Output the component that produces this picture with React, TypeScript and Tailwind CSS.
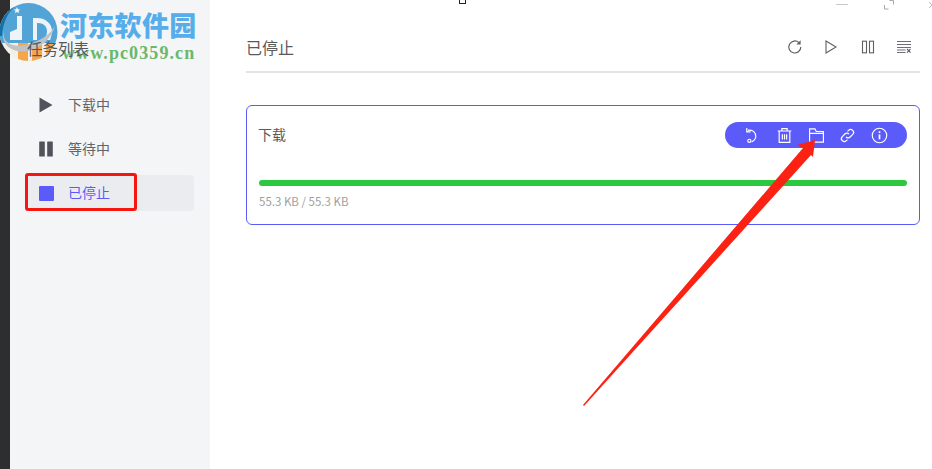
import React from "react";

const cjk = { fontFamily: '"Noto Sans CJK SC", "Noto Sans", sans-serif' };

function NavItem({ icon, label, active }: { icon: React.ReactNode; label: string; active?: boolean }) {
  return (
    <div className={`flex h-9 w-[168px] items-center rounded-[4px] pl-[12px] ${active ? "bg-[#ebecf0] text-[#5b5bfa]" : "text-[#62656b]"}`}>
      <span className="flex w-[16px] justify-center">{icon}</span>
      <span className="ml-[14px] pb-[2px] text-[14px] leading-none">{label}</span>
    </div>
  );
}

function ToolIcon({ children, size = 16 }: { children: React.ReactNode; size?: number }) {
  return (
    <svg width={size} height={size} viewBox="0 0 16 16" fill="none" stroke="currentColor" strokeWidth="1.1">
      {children}
    </svg>
  );
}

export default function App() {
  return (
    <div className="relative flex h-[469px] w-[932px] overflow-hidden bg-white" style={cjk}>
      <div className="w-[10px] shrink-0 bg-[#2e2e2e]" />
      <aside className="flex w-[200px] shrink-0 flex-col bg-[#f4f5f7] pl-[16px]">
        <div className="relative z-10 mt-[37px] h-[22px] pl-[1px] text-[15.5px] leading-[22px] text-[#55585c]">任务列表</div>
        <nav className="mt-[28px] flex flex-col gap-[8px]">
          <NavItem label="下载中" icon={<svg width="14" height="16" viewBox="0 0 14 16"><path d="M0.5 0.5 13.5 8 0.5 15.5Z" fill="#50535c" /></svg>} />
          <NavItem label="等待中" icon={<svg width="14" height="16" viewBox="0 0 14 16"><rect x="0.2" y="0.5" width="5.6" height="15" rx="0.5" fill="#50535c" /><rect x="8.2" y="0.5" width="5.6" height="15" rx="0.5" fill="#50535c" /></svg>} />
          <NavItem active label="已停止" icon={<span className="block h-[15px] w-[15px] rounded-[1px] bg-[#5b5bfa]" />} />
        </nav>
      </aside>

      <main className="min-w-0 flex-1 pl-[36px] pr-[12px]">
        <header className="mt-[28px] flex h-[45px] items-start justify-between border-b-2 border-[#e4e4e4]">
          <h1 className="mt-[8px] text-[16px] font-normal leading-[22px] text-[#5a5a5a]">已停止</h1>
          <div className="mt-[11px] flex items-center gap-[20.3px] pr-[8px] text-[#5c6066]">
            <ToolIcon><path d="M13.8 8a6 6 0 1 1-2-4.5" strokeWidth="1.2" /><path d="M13.6 1.2V5.4H9.4Z" fill="currentColor" stroke="none" /></ToolIcon>
            <ToolIcon><path d="M3 2 13 8 3 14Z" /></ToolIcon>
            <ToolIcon><rect x="2.5" y="2.2" width="4" height="11.6" /><rect x="9.5" y="2.2" width="4" height="11.6" /></ToolIcon>
            <ToolIcon><path d="M1 2.5h14M1 5.5h14M1 8.5h14M1 11h8.5M1 13.5h8.5" strokeWidth="0.9" /><path d="m11 10 3.5 3.7M14.5 10 11 13.7" /></ToolIcon>
          </div>
        </header>

        <section className="mt-[32px] h-[120px] rounded-[6px] border border-[#5b5bfa] px-[12px]">
          <div className="flex h-[74px] items-start justify-between pt-[16px]">
            <span className="-ml-[1px] text-[14px] leading-[25px] text-[#5a5a5a]">下载</span>
            <div className="flex h-[26px] w-[182px] items-center justify-between rounded-full bg-[#5b5bfa] pl-[19px] pr-[19px] text-white">
              <ToolIcon size={17}><path d="M3.6 3.2A5.6 5.6 0 1 1 7.2 14" /><path d="M2.6 1v3.6h3.6" /><circle cx="5" cy="13" r="1.5" /></ToolIcon>
              <ToolIcon size={17}><path d="M1.6 3.8h12.8M5.5 3.5V1.5h5v2M3 4v10.5h10V4M6 6.8v5M8 6.8v5M10 6.8v5" /></ToolIcon>
              <ToolIcon size={17}><path d="M1.5 14.3V1.8h5l1.3 2.4h6.7v10.1ZM1.5 6h13" /></ToolIcon>
              <ToolIcon size={17}><path d="M6.6 9.4a2.7 2.7 0 0 0 3.9 0l2.4-2.4a2.7 2.7 0 0 0-3.9-3.9l-1 1" /><path d="M9.4 6.6a2.7 2.7 0 0 0-3.9 0L3.1 9a2.7 2.7 0 0 0 3.9 3.9l1-1" /></ToolIcon>
              <ToolIcon size={17}><circle cx="8" cy="8" r="6.8" /><path d="M8 7v4.6" strokeWidth="1.6" /><path d="M8 4v1.7" strokeWidth="1.6" /></ToolIcon>
            </div>
          </div>
          <div className="h-[6px] rounded-full bg-[#2bc840]" />
          <div className="mt-[7px] text-[11.5px] leading-[16px] text-[#a0a0a0]">55.3 KB / 55.3 KB</div>
        </section>
      </main>

      {/* window controls, cut off at the top edge */}
      <div className="absolute left-[836px] top-[4px] h-px w-[12px] bg-[#c8c8c8]" />
      <svg className="absolute left-[883px] top-0" width="12" height="10" viewBox="0 0 12 10" fill="none" stroke="#a8a8a8"><path d="M1.5 5v4h4M6.5 .5h4v4" /></svg>
      <div className="absolute left-[929px] top-[2px] h-[6px] w-[3px]"><svg width="3" height="6"><path d="M0 0 3 3 0 6" fill="none" stroke="#bbb" /></svg></div>
      <div className="absolute left-[459px] top-[-3px] h-[7px] w-[7px] border border-[#222]" />

      {/* red annotation box */}
      <div className="absolute left-[25px] top-[173px] h-[38px] w-[112px] rounded-[3px] border-[3px] border-[#f5170f]" />

      {/* red annotation arrow */}
      <svg className="absolute left-0 top-0" width="932" height="469" viewBox="0 0 932 469">
        <path d="M583 405 803 148 797 145 815 140 813 157 811 155 584 406Z" fill="#fb2213" />
      </svg>

      {/* watermark */}
      <svg className="absolute left-0 top-[2px]" width="58" height="60" viewBox="0 0 58 60">
        <defs><clipPath id="c"><circle cx="28.5" cy="30" r="29" /></clipPath></defs>
        <g clipPath="url(#c)">
          <rect width="58" height="60" fill="#f3efe9" />
          <path d="M0 0h58v41H0Z" fill="#52a3d6" />
          <path d="M0 0h20C9 8 3 18 2 34H0Z" fill="#1272a8" />
          <path d="M10 38V30l7-3V14h5v24Z" fill="#eef3f7" />
          <path d="M17 5l1 2.2 2.2.3-1.6 1.5.4 2.2-2-1.1-2 1.1.4-2.2-1.6-1.5 2.2-.3Z" fill="#e9f2f8" />
          <path d="M33 38V16h4c9 0 15 6 15 13 0 3-1 6-2 9h-6c2-3 3-6 3-9 0-5-4-8-9-8h-1v17Z" fill="#eef3f7" />
          <path d="M18 41h40v19H18Z" fill="#f3a64c" />
          <path d="M28 41h4v19h-4Z" fill="#f3efe9" />
          <path d="M42 41h4v19h-4Z" fill="#f3efe9" />
          <path d="M4 28C1 40 12 46 26 43c12-3 23-9 29-19-4 14-15 22-27 25C13 52 -1 42 4 28Z" fill="#bfc3c6" />
        </g>
      </svg>
      <div className="absolute left-[60px] top-[5px] whitespace-nowrap text-[27px] font-black leading-[40px] text-[#56ade9]" style={{ fontFamily: '"Noto Sans CJK SC", sans-serif', letterSpacing: "0.3px" }}>河东软件园</div>
      <div className="absolute left-[62px] top-[42px] whitespace-nowrap text-[18px] font-bold leading-[22px] text-[#69b86b]" style={{ fontFamily: '"Liberation Serif", serif', letterSpacing: "1.1px" }}>www.pc0359.cn</div>
    </div>
  );
}
